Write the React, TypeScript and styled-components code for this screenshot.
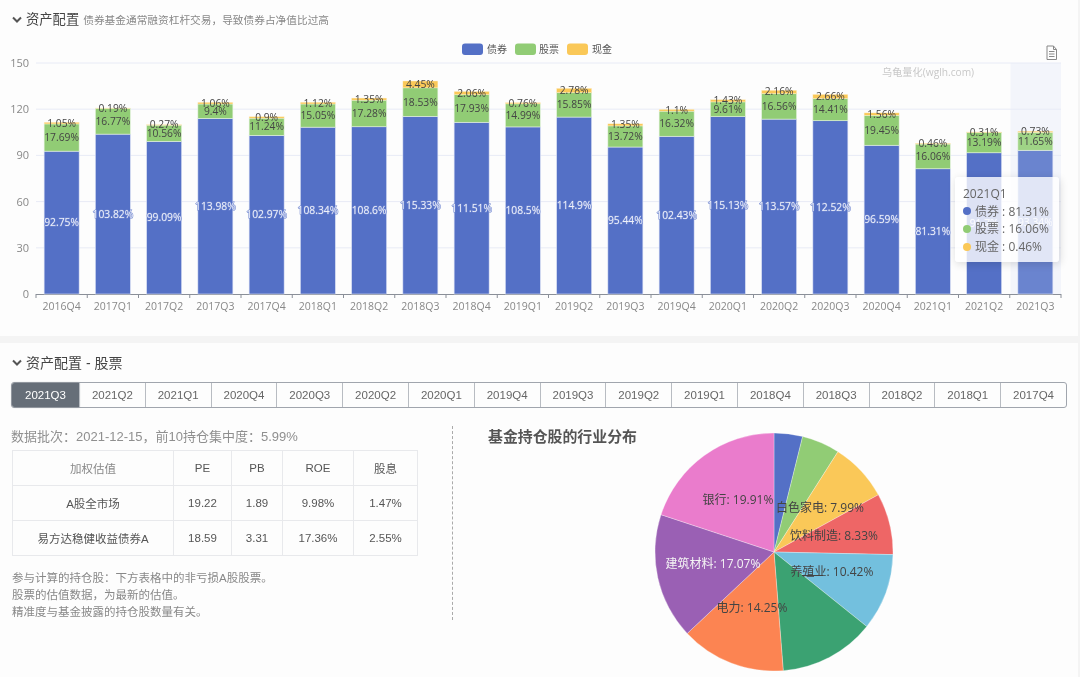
import React from 'react';
import styled, { createGlobalStyle } from 'styled-components';

const FONT = `"Open Sans", "Noto Sans CJK SC", sans-serif`;
const BLUE = '#5470c6';
const GREEN = '#91cc75';
const YELLOW = '#fac858';

const GlobalStyle = createGlobalStyle`
  html, body {
    margin: 0;
    padding: 0;
    background: #f4f4f4;
  }
  body {
    font-family: "Liberation Sans", "Noto Sans CJK SC", sans-serif;
  }
`;

const Page = styled.div`
  width: 1080px;
  height: 677px;
  overflow: hidden;
  display: flex;
  flex-direction: column;
  gap: 7px;
  filter: blur(0.4px);
`;

const Card = styled.section<{ $height: number }>`
  width: 1078px;
  height: ${(p) => p.$height}px;
  background: #fdfdfd;
  flex: none;
`;

const SectionHeader = styled.header`
  display: flex;
  align-items: center;
  height: 20px;
  padding: 10px 0 0 12px;
`;

const HeaderTitle = styled.h2<{ $size: number }>`
  margin: 0 0 0 4px;
  font-size: ${(p) => p.$size}px;
  line-height: 20px;
  font-weight: 400;
  color: #444;
`;

const HeaderNote = styled.span`
  margin-left: 4px;
  font-size: 10.7px;
  line-height: 20px;
  color: #888;
`;

const ChartArea = styled.div`
  position: relative;
  width: 1078px;
  height: 306px;
`;

const ChartSvg = styled.svg`
  display: block;
  font-family: ${FONT};
`;

const Tooltip = styled.div`
  position: absolute;
  left: 955px;
  top: 147px;
  width: 104px;
  height: 85px;
  box-sizing: border-box;
  padding: 8px 0 0 8px;
  background: rgba(255, 255, 255, 0.8);
  border-radius: 3px;
  box-shadow: 1px 2px 8px rgba(0, 0, 0, 0.14);
  font-family: ${FONT};
  font-size: 12px;
  line-height: 17.6px;
  color: #666;
`;

const TooltipRow = styled.div`
  display: flex;
  align-items: center;
  white-space: pre;
`;

const Dot = styled.i<{ $color: string }>`
  width: 8px;
  height: 8px;
  margin-right: 4px;
  border-radius: 50%;
  background: ${(p) => p.$color};
`;

const Tabs = styled.div`
  display: flex;
  width: 1056px;
  height: 26px;
  margin: 9px 0 0 11px;
  box-sizing: border-box;
  border: 1px solid #a0a5ad;
  border-radius: 3px;
`;

const Tab = styled.button<{ $active?: boolean }>`
  flex: ${(p) => (p.$active ? '0 0 67px' : '1')};
  margin: 0;
  padding: 0;
  border: 0;
  border-left: ${(p) => (p.$active ? '0' : '1px solid #b8bcc2')};
  background: ${(p) => (p.$active ? '#666e78' : 'transparent')};
  box-shadow: ${(p) => (p.$active ? '0 0 2px #666e78' : 'none')};
  border-radius: ${(p) => (p.$active ? '3px 0 0 3px' : '0')};
  color: ${(p) => (p.$active ? '#fff' : '#666')};
  font-family: "Liberation Sans", sans-serif;
  font-size: 11.5px;
`;

const Body = styled.div`
  display: flex;
  height: 250px;
`;

const LeftPane = styled.div`
  width: 453px;
  height: 194px;
  margin-top: 18px;
  flex: none;
  box-sizing: border-box;
  padding: 1px 0 0 11px;
  border-right: 1px dashed #aaa;
`;

const BatchLine = styled.p`
  margin: 0;
  font-size: 13px;
  line-height: 20px;
  color: #8f8f8f;
`;

const ValueTable = styled.table`
  width: 405px;
  margin: 3px 0 0 1px;
  border-collapse: collapse;
  table-layout: fixed;
  font-size: 11.5px;
  color: #555;
  text-align: center;

  th, td {
    height: 34px;
    padding: 0;
    border: 1px solid #e8e9ec;
    font-weight: 400;
  }
`;

const FirstHead = styled.th`
  color: #888;
`;

const Notes = styled.p`
  margin: 14px 0 0 1px;
  font-size: 11.5px;
  line-height: 17px;
  color: #888;
`;

const RightPane = styled.div`
  flex: 1;
  display: flex;
  align-items: flex-start;
`;

const PieTitle = styled.h3`
  width: 166px;
  margin: 18px 0 0 35px;
  flex: none;
  font-size: 14.9px;
  line-height: 22px;
  white-space: nowrap;
  color: #555;
`;

const PieSvg = styled.svg`
  display: block;
  flex: none;
  margin: 24px 0 0 0;
  font-family: ${FONT};
`;

const quarters = ['2016Q4', '2017Q1', '2017Q2', '2017Q3', '2017Q4', '2018Q1', '2018Q2', '2018Q3', '2018Q4', '2019Q1', '2019Q2', '2019Q3', '2019Q4', '2020Q1', '2020Q2', '2020Q3', '2020Q4', '2021Q1', '2021Q2', '2021Q3'];
const bonds = [92.75, 103.82, 99.09, 113.98, 102.97, 108.34, 108.6, 115.33, 111.51, 108.5, 114.9, 95.44, 102.43, 115.13, 113.57, 112.52, 96.59, 81.31, 91.7, 93.34];
const stocks = [17.69, 16.77, 10.56, 9.4, 11.24, 15.05, 17.28, 18.53, 17.93, 14.99, 15.85, 13.72, 16.32, 9.61, 16.56, 14.41, 19.45, 16.06, 13.19, 11.65];
const cash = [1.05, 0.19, 0.27, 1.06, 0.9, 1.12, 1.35, 4.45, 2.06, 0.76, 2.78, 1.35, 1.1, 1.43, 2.16, 2.66, 1.56, 0.46, 0.31, 0.73];

// chart coordinates, relative to the chart area (which starts at y=30)
const X0 = 36;
const STEP = 51.25;
const BAR = 35;
const Y0 = 264;
const UNIT = 231 / 150;
const yOf = (v: number) => Y0 - v * UNIT;

const legend = [
  { name: '债券', color: BLUE, x: 462, textX: 487 },
  { name: '股票', color: GREEN, x: 515, textX: 539 },
  { name: '现金', color: YELLOW, x: 567, textX: 592 },
];

const BarChart = () => (
  <ChartSvg width={1078} height={306} viewBox="0 0 1078 306">
    <rect x={1010.5} y={33} width={50.5} height={231} fill="#f3f5fb" />
    {[30, 60, 90, 120, 150].map((v) => (
      <line key={v} x1={X0} x2={1061} y1={yOf(v)} y2={yOf(v)} stroke="#e8ebf6" strokeWidth={1} />
    ))}
    {[0, 30, 60, 90, 120, 150].map((v) => (
      <text key={v} x={29} y={yOf(v) + 4} textAnchor="end" fontSize={11} fill="#888">{v}</text>
    ))}
    <line x1={X0} x2={1061} y1={Y0 + 0.5} y2={Y0 + 0.5} stroke="#8a8f98" />
    {Array.from({ length: 21 }, (_, i) => (
      <line key={i} x1={X0 + i * STEP} x2={X0 + i * STEP} y1={Y0} y2={Y0 + 4} stroke="#8a8f98" />
    ))}
    {quarters.map((q, i) => {
      const cx = X0 + (i + 0.5) * STEP;
      const left = cx - BAR / 2;
      const last = i === quarters.length - 1;
      const b = bonds[i];
      const s = stocks[i];
      const c = cash[i];
      return (
        <g key={q}>
          <rect x={left} y={yOf(b)} width={BAR} height={b * UNIT} fill={last ? '#6a84cf' : BLUE} stroke="#dde3f5" strokeWidth={0.6} />
          <rect x={left} y={yOf(b + s)} width={BAR} height={s * UNIT} fill={last ? '#9fd486' : GREEN} stroke="#e6f3df" strokeWidth={0.6} />
          <rect x={left} y={yOf(b + s + c)} width={BAR} height={c * UNIT} fill={YELLOW} stroke="#fdf0d0" strokeWidth={0.4} />
          <text x={cx} y={yOf(b / 2) + 3.5} textAnchor="middle" fontSize={10.3} fill="#eef1fa" stroke="#7187d0" strokeWidth={1.1} paintOrder="stroke">{b}%</text>
          <text x={cx} y={yOf(b + s / 2) + 3.5} textAnchor="middle" fontSize={10.3} fill="#444">{s}%</text>
          <text x={cx} y={yOf(b + s + c / 2) + 3.5} textAnchor="middle" fontSize={10.3} fill="#444">{c}%</text>
          <text x={cx} y={Y0 + 16} textAnchor="middle" fontSize={10.5} fill="#888">{q}</text>
        </g>
      );
    })}
    {legend.map((l) => (
      <g key={l.name}>
        <rect x={l.x} y={13.5} width={21} height={11.5} rx={3} fill={l.color} />
        <text x={l.textX} y={22.5} fontSize={10} fill="#555">{l.name}</text>
      </g>
    ))}
    <g fill="none" stroke="#888" strokeWidth={1}>
      <path d="M1047 16h6.5l3 3.5v10h-9.5z" />
      <path d="M1053.5 16v3.5h3M1049 21.5h5.5M1049 24h5.5M1049 26.5h5.5" />
    </g>
    <text x={882} y={46} fontSize={10.2} fill="#c8c8c8">乌龟量化(wglh.com)</text>
  </ChartSvg>
);

const slices = [
  { value: 3.87, color: '#5470c6' },
  { value: 5.16, color: '#91cc75' },
  { value: 7.99, color: '#fac858' },
  { value: 8.33, color: '#ee6666' },
  { value: 10.42, color: '#73c0de' },
  { value: 12.99, color: '#3ba272' },
  { value: 14.25, color: '#fc8452' },
  { value: 17.07, color: '#9a60b4' },
  { value: 19.92, color: '#ea7ccc' },
];

// label centres, in the pie's own coordinates
const pieLabels = [
  { text: '白色家电: 7.99%', x: 166, y: 76, fill: '#444' },
  { text: '饮料制造: 8.33%', x: 180, y: 104, fill: '#444' },
  { text: '养殖业: 10.42%', x: 178, y: 140, fill: '#444' },
  { text: '电力: 14.25%', x: 98, y: 176, fill: '#444' },
  { text: '建筑材料: 17.07%', x: 59, y: 132, fill: '#f4f4f4' },
  { text: '银行: 19.91%', x: 84, y: 68, fill: '#444' },
];

const PIE_C = 120;
const PIE_R = 119;

const polar = (deg: number) => {
  const a = (deg * Math.PI) / 180;
  return [PIE_C + PIE_R * Math.sin(a), PIE_C - PIE_R * Math.cos(a)];
};

const PieChart = () => {
  let acc = 0;
  return (
    <PieSvg width={240} height={240} viewBox="0 0 240 240">
      {slices.map((s) => {
        const from = acc;
        acc += (s.value / 100) * 360;
        const [x1, y1] = polar(from);
        const [x2, y2] = polar(acc);
        return (
          <path
            key={s.color}
            d={`M${PIE_C} ${PIE_C}L${x1} ${y1}A${PIE_R} ${PIE_R} 0 0 1 ${x2} ${y2}Z`}
            fill={s.color}
            stroke="#fff"
            strokeWidth={0.3}
          />
        );
      })}
      <line x1={148} x2={169} y1={143.5} y2={143.5} stroke="#444" />
      {pieLabels.map((l) => (
        <text key={l.text} x={l.x} y={l.y + 4} textAnchor="middle" fontSize={12} fill={l.fill}>{l.text}</text>
      ))}
    </PieSvg>
  );
};

const tabs = ['2021Q3', '2021Q2', '2021Q1', '2020Q4', '2020Q3', '2020Q2', '2020Q1', '2019Q4', '2019Q3', '2019Q2', '2019Q1', '2018Q4', '2018Q3', '2018Q2', '2018Q1', '2017Q4'];

const Chevron = () => (
  <svg width={10} height={8} viewBox="0 0 10 8">
    <path d="M1 1.5L5 5.5L9 1.5" fill="none" stroke="#555" strokeWidth={2} />
  </svg>
);

export default function App() {
  return (
    <Page>
      <GlobalStyle />
      <Card $height={336}>
        <SectionHeader>
          <Chevron />
          <HeaderTitle $size={13.3}>资产配置</HeaderTitle>
          <HeaderNote>债券基金通常融资杠杆交易，导致债券占净值比过高</HeaderNote>
        </SectionHeader>
        <ChartArea>
          <BarChart />
          <Tooltip>
            <div>2021Q1</div>
            <TooltipRow><Dot $color={BLUE} />债券 : 81.31%</TooltipRow>
            <TooltipRow><Dot $color={GREEN} />股票 : 16.06%</TooltipRow>
            <TooltipRow><Dot $color={YELLOW} />现金 : 0.46%</TooltipRow>
          </Tooltip>
        </ChartArea>
      </Card>
      <Card $height={334}>
        <SectionHeader>
          <Chevron />
          <HeaderTitle $size={14}>资产配置 - 股票</HeaderTitle>
        </SectionHeader>
        <Tabs>
          {tabs.map((t, i) => (
            <Tab key={t} $active={i === 0}>{t}</Tab>
          ))}
        </Tabs>
        <Body>
          <LeftPane>
            <BatchLine>数据批次：2021-12-15，前10持仓集中度：5.99%</BatchLine>
            <ValueTable>
              <colgroup>
                <col width={161} />
                <col width={58} />
                <col width={51} />
                <col width={71} />
                <col width={64} />
              </colgroup>
              <thead>
                <tr>
                  <FirstHead>加权估值</FirstHead>
                  <th>PE</th>
                  <th>PB</th>
                  <th>ROE</th>
                  <th>股息</th>
                </tr>
              </thead>
              <tbody>
                <tr>
                  <td>A股全市场</td>
                  <td>19.22</td>
                  <td>1.89</td>
                  <td>9.98%</td>
                  <td>1.47%</td>
                </tr>
                <tr>
                  <td>易方达稳健收益债券A</td>
                  <td>18.59</td>
                  <td>3.31</td>
                  <td>17.36%</td>
                  <td>2.55%</td>
                </tr>
              </tbody>
            </ValueTable>
            <Notes>
              参与计算的持仓股：下方表格中的非亏损A股股票。<br />
              股票的估值数据，为最新的估值。<br />
              精准度与基金披露的持仓股数量有关。
            </Notes>
          </LeftPane>
          <RightPane>
            <PieTitle>基金持仓股的行业分布</PieTitle>
            <PieChart />
          </RightPane>
        </Body>
      </Card>
    </Page>
  );
}
